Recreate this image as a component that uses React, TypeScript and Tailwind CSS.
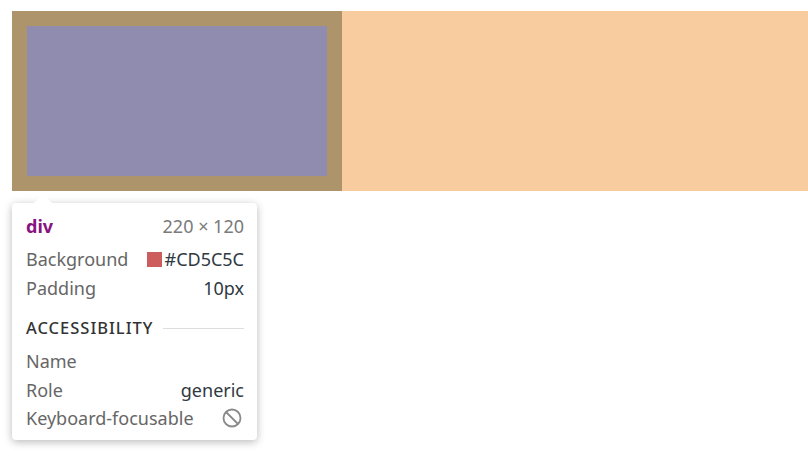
import React from 'react';

const font = { fontFamily: '"Noto Sans", "Open Sans", sans-serif' };

const Row: React.FC<{ label: string; children?: React.ReactNode; className?: string }> = ({ label, children, className }) => (
  <div className={`flex items-center justify-between h-[28px] ${className ?? ''}`}>
    <span className="text-[#666666]">{label}</span>
    {children}
  </div>
);

const BlockIcon = () => (
  <svg width="20" height="20" viewBox="0 0 20 20" className="mr-[2px]">
    <circle cx="10" cy="10" r="8.5" fill="none" stroke="#8a8a8a" strokeWidth="1.8" />
    <line x1="4" y1="4" x2="16" y2="16" stroke="#8a8a8a" strokeWidth="1.8" />
  </svg>
);

export default function App() {
  return (
    <div className="w-[808px] h-[463px] bg-white overflow-hidden pt-[11px] pl-[12px]" style={font}>
      {/* highlighted element: padding box + content, margin fills the row */}
      <div className="flex h-[180px]">
        <div className="w-[330px] h-[180px] p-[15px] bg-[#ad946b]">
          <div className="w-full h-full bg-[#8f8caf]" />
        </div>
        <div className="flex-1 bg-[#f8cc9f]" />
      </div>

      {/* inspect tooltip */}
      <div className="relative mt-[12px] w-[245px] rounded-[4px] bg-white px-[13px] pl-[14px] pt-[9px] pb-[8px] text-[18px] leading-none shadow-[0_2px_8px_rgba(0,0,0,0.28)]">
        <div className="absolute -top-[9px] left-[21px] w-0 h-0 border-l-[10px] border-r-[10px] border-b-[10px] border-l-transparent border-r-transparent border-b-white" />

        <div className="flex items-center justify-between h-[28px]">
          <span className="font-bold text-[#881280]">div</span>
          <span className="text-[#7a7a7a]">220 × 120</span>
        </div>

        <Row label="Background" className="mt-[5px]">
          <span className="flex items-center text-[#303942]">
            <span className="w-[15px] h-[15px] bg-[#cd5c5c] mr-[3px]" />
            #CD5C5C
          </span>
        </Row>
        <Row label="Padding" className="h-[29px]">
          <span className="text-[#303942]">10px</span>
        </Row>

        <div className="flex items-center h-[28px] mt-[12px]">
          <span className="text-[#333333] font-medium text-[16.5px] tracking-[0.06em]">ACCESSIBILITY</span>
          <div className="flex-1 h-px bg-[#dddddd] ml-[10px]" />
        </div>

        <Row label="Name" className="mt-[5px]" />
        <Row label="Role" className="mt-[1px]">
          <span className="text-[#303942]">generic</span>
        </Row>
        <Row label="Keyboard-focusable">
          <BlockIcon />
        </Row>
      </div>
    </div>
  );
}
